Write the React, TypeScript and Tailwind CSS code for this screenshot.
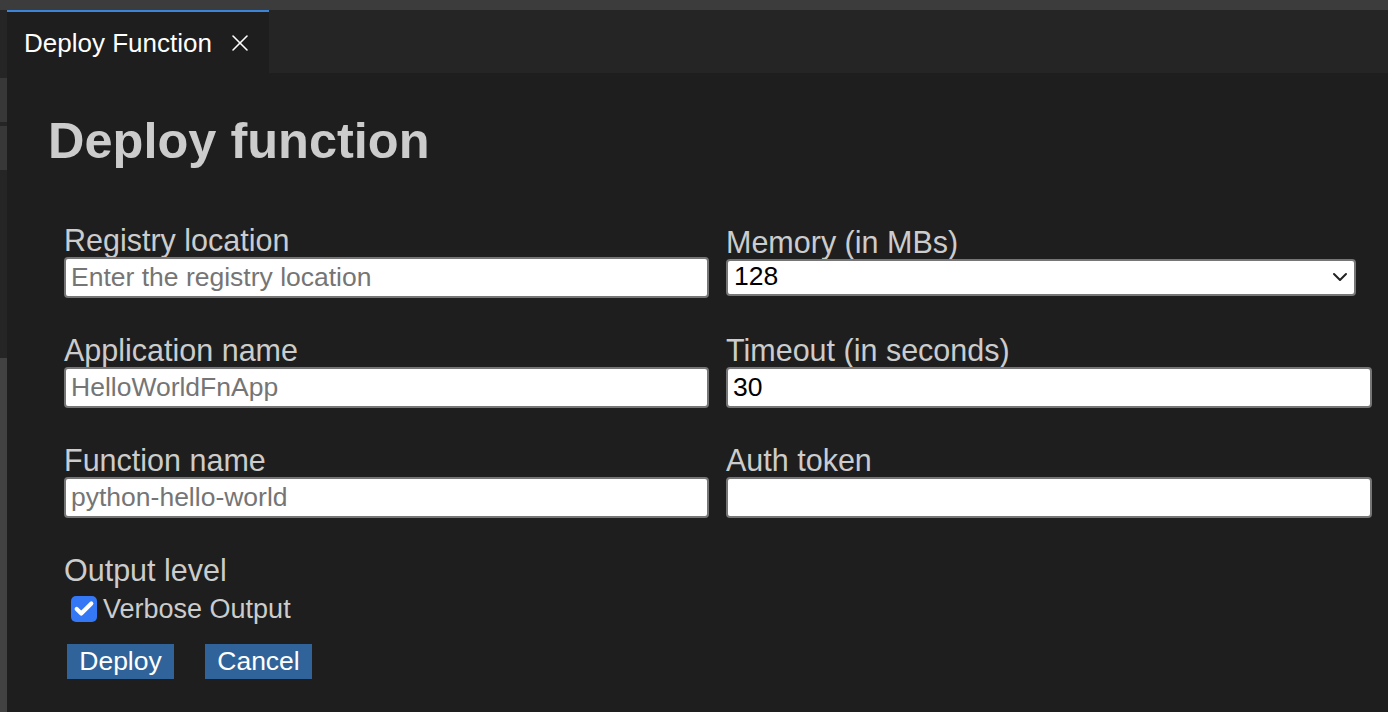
import React from 'react';
import { X, ChevronDown, Check } from 'lucide-react';

const font = { fontFamily: '"Liberation Sans", Arial, Helvetica, sans-serif' };

const Field = ({ label, placeholder, value }: { label: string; placeholder?: string; value?: string }) => (
  <div className="flex flex-col">
    <label className="mb-[2px] text-[30.5px] leading-[29px] text-[#cccccc]">{label}</label>
    <input
      defaultValue={value}
      placeholder={placeholder}
      className="h-[41px] w-full rounded-[4px] border-2 border-[#767676] bg-white px-[5px] text-[26.5px] text-black outline-none placeholder:text-[#757575]"
    />
  </div>
);

const App = () => {
  return (
    <div className="flex h-[712px] w-[1388px] flex-col overflow-hidden bg-[#1e1e1e]" style={font}>
      <div className="h-[10px] shrink-0 bg-[#3c3c3c]" />
      <div className="flex min-h-0 flex-1">
        {/* sidebar edge */}
        <div className="flex w-[7px] shrink-0 flex-col bg-[#252526]">
          <div className="h-[68px]" />
          <div className="h-[44px] bg-[#383838]" />
          <div className="h-[4px]" />
          <div className="h-[44px] bg-[#383838]" />
          <div className="h-[188px]" />
          <div className="flex-1 bg-[#424242]" />
        </div>

        <div className="flex min-w-0 flex-1 flex-col">
          {/* tabs */}
          <div className="flex h-[63px] shrink-0 bg-[#252526]">
            <div className="flex w-[262px] items-center border-t-2 border-[#3a85d9] bg-[#1e1e1e] pl-[17px]">
              <span className="text-[26px] leading-none text-white">Deploy Function</span>
              <X className="ml-[14px] text-white" size={28} strokeWidth={1.3} />
            </div>
          </div>

          {/* page */}
          <div className="flex-1 pl-[41px] pr-[16px] pt-[38px]">
            <h1 className="text-[50.5px] font-bold leading-[60px] text-[#cccccc]">Deploy function</h1>

            <div className="mt-[55px] grid grid-cols-[645px_646px] gap-x-[17px] gap-y-[38px] pl-[16px]">
              <Field label="Registry location" placeholder="Enter the registry location" />
              <div className="flex flex-col">
                <label className="mb-[2px] pt-[2px] text-[30.5px] leading-[29px] text-[#cccccc]">Memory (in MBs)</label>
                <div className="relative mr-[16px] h-[37px]">
                  <select
                    defaultValue="128"
                    className="h-full w-full appearance-none rounded-[4px] border-2 border-[#767676] bg-white px-[6px] pb-[3px] text-[26.5px] leading-[30px] text-black outline-none"
                  >
                    <option>128</option>
                    <option>256</option>
                    <option>512</option>
                  </select>
                  <ChevronDown className="pointer-events-none absolute right-[4px] top-[6px] text-[#222]" size={24} strokeWidth={2} />
                </div>
              </div>

              <Field label="Application name" placeholder="HelloWorldFnApp" />
              <Field label="Timeout (in seconds)" value="30" />

              <Field label="Function name" placeholder="python-hello-world" />
              <Field label="Auth token" />
            </div>

            <div className="mt-[38px] pl-[16px]">
              <div className="text-[30.5px] leading-[29px] text-[#cccccc]">Output level</div>
              <label className="mt-[9px] flex items-center">
                <span className="ml-[7px] flex h-[26px] w-[26px] items-center justify-center rounded-[5px] bg-[#3478f6]">
                  <Check className="text-white" size={22} strokeWidth={4.5} />
                </span>
                <span className="ml-[6px] text-[27px] leading-[30px] text-[#cccccc]">Verbose Output</span>
              </label>
              <div className="mt-[20px] flex gap-[31px] pl-[3px]">
                <button className="h-[35px] w-[107px] bg-[#2f6399] text-[26.5px] leading-none text-white">Deploy</button>
                <button className="h-[35px] w-[107px] bg-[#2f6399] text-[26.5px] leading-none text-white">Cancel</button>
              </div>
            </div>
          </div>
        </div>
      </div>
    </div>
  );
};

export default App;
